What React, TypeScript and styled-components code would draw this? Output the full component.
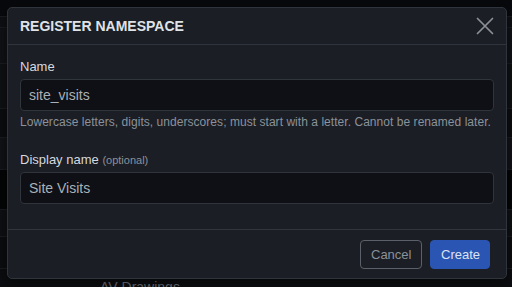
import React from "react";
import styled, { createGlobalStyle } from "styled-components";

const Global = createGlobalStyle`
  html, body { margin: 0; padding: 0; background: #0a0b0e; }
  body { font-family: "Liberation Sans", Arial, sans-serif; overflow: hidden; }
  * { box-sizing: border-box; }
`;

const Page = styled.div`
  position: relative;
  width: 512px;
  height: 287px;
  overflow: hidden;
  background: #0a0b0e;
`;

const BgRow = styled.div<{ $h: number; $bg: string }>`
  height: ${(p) => p.$h}px;
  background: ${(p) => p.$bg};
  border-bottom: 1px solid #1a1c21;
  padding: 10px 0 0 100px;
  color: #6b7079;
  font-size: 14px;
  line-height: 16px;
`;

const Modal = styled.div`
  position: absolute;
  left: 7px;
  top: 7px;
  width: 500px;
  height: 272px;
  background: #1b1e25;
  border: 1px solid #30343c;
  border-radius: 5px;
  display: flex;
  flex-direction: column;
  box-shadow: 0 4px 16px rgba(0, 0, 0, 0.5);
`;

const Header = styled.div`
  height: 37px;
  flex: none;
  display: flex;
  align-items: center;
  justify-content: space-between;
  padding: 0 11px 0 12px;
  border-bottom: 1px solid #30343c;
`;

const Title = styled.h2`
  margin: 0;
  font-size: 14px;
  font-weight: 700;
  line-height: 20px;
  color: #dfe3e8;
`;

const CloseBtn = styled.button`
  width: 20px;
  height: 20px;
  padding: 0;
  border: 0;
  background: transparent;
  display: flex;
  align-items: center;
  justify-content: center;
  color: #8b9098;
`;

const Body = styled.div`
  flex: 1;
  padding: 14px 12px 0 12px;
  display: flex;
  flex-direction: column;
`;

const Field = styled.div<{ $mb: number }>`
  display: flex;
  flex-direction: column;
  margin-bottom: ${(p) => p.$mb}px;
`;

const Label = styled.label`
  font-size: 13px;
  line-height: 16px;
  color: #d5d9df;
  margin-bottom: 4px;
`;

const Optional = styled.span`
  font-size: 11px;
  color: #8b9199;
`;

const Input = styled.input`
  height: 32px;
  width: 100%;
  background: #0e1015;
  border: 1px solid #30343b;
  border-radius: 4px;
  padding: 0 8px;
  font-family: "Liberation Sans", Arial, sans-serif;
  font-size: 14px;
  color: #aab0b7;
  outline: none;
`;

const Help = styled.div`
  margin-top: 3px;
  font-size: 12px;
  line-height: 16px;
  letter-spacing: 0.045px;
  color: #8b929a;
  white-space: nowrap;
`;

const Footer = styled.div`
  flex: none;
  height: 49px;
  border-top: 1px solid #30343c;
  display: flex;
  align-items: center;
  justify-content: flex-end;
  gap: 8px;
  padding: 0 16px;
`;

const Button = styled.button<{ $primary?: boolean }>`
  height: 29px;
  padding: 0 10px;
  border-radius: 4px;
  font-family: "Liberation Sans", Arial, sans-serif;
  font-size: 13px;
  border: 1px solid ${(p) => (p.$primary ? "#2b55b3" : "#5b6069")};
  background: ${(p) => (p.$primary ? "#2b55b3" : "transparent")};
  color: ${(p) => (p.$primary ? "#dbe3f3" : "#8b9199")};
  width: ${(p) => (p.$primary ? "60px" : "62px")};
`;

const rows: [number, string, string?][] = [
  [17, "#08090c"],
  [11, "#0f1013"],
  [36, "#111216"],
  [45, "#101114"],
  [29, "#0c0d10"],
  [32, "#121317"],
  [40, "#040506"],
  [27, "#0f1013"],
  [32, "#0c0d10"],
  [30, "#0c0d10", "AV Drawings"],
];

export default function App() {
  return (
    <>
      <Global />
      <Page>
        {rows.map(([h, bg, t], i) => (
          <BgRow key={i} $h={h} $bg={bg}>
            {t}
          </BgRow>
        ))}
        <Modal>
          <Header>
            <Title>REGISTER NAMESPACE</Title>
            <CloseBtn aria-label="Close">
              <svg width="18" height="18" viewBox="0 0 18 18">
                <path d="M1.5 1.5 L16.5 16.5 M16.5 1.5 L1.5 16.5" stroke="currentColor" strokeWidth="1.7" strokeLinecap="round" />
              </svg>
            </CloseBtn>
          </Header>
          <Body>
            <Field $mb={22}>
              <Label>Name</Label>
              <Input defaultValue="site_visits" />
              <Help>Lowercase letters, digits, underscores; must start with a letter. Cannot be renamed later.</Help>
            </Field>
            <Field $mb={0}>
              <Label>
                Display name <Optional>(optional)</Optional>
              </Label>
              <Input defaultValue="Site Visits" />
            </Field>
          </Body>
          <Footer>
            <Button>Cancel</Button>
            <Button $primary>Create</Button>
          </Footer>
        </Modal>
      </Page>
    </>
  );
}
